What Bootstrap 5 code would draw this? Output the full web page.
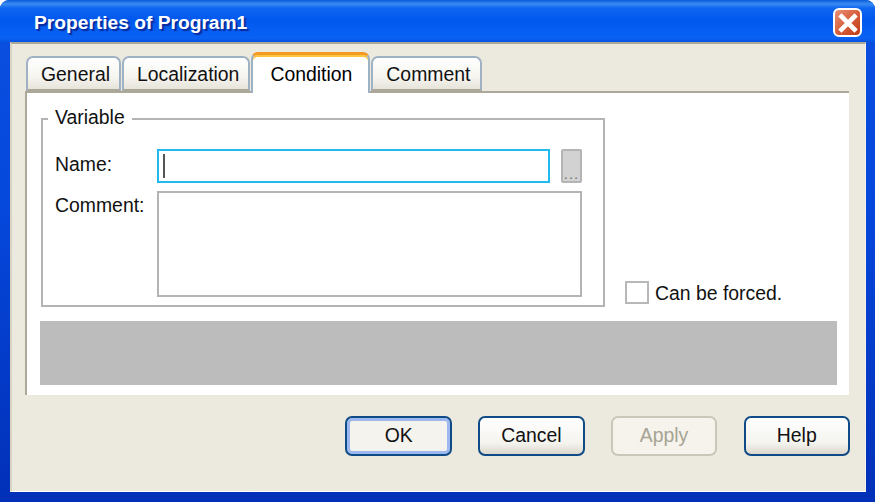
<!DOCTYPE html>
<html lang="en">
<head>
<meta charset="utf-8">
<title>Properties of Program1</title>
<link href="https://cdn.jsdelivr.net/npm/bootstrap@5.3.0/dist/css/bootstrap.min.css" rel="stylesheet">
<style>
html,body{margin:0;background:#fff;height:100%;overflow:hidden}
body{font-family:"Liberation Sans",Arial,sans-serif;font-size:19.4px;color:#111}
.xpwin{width:875px;height:502px;border-radius:9px 9px 0 0;overflow:hidden;background:linear-gradient(180deg,#0a50e0 0%,#0548dc 40%,#0230b8 100%);padding:0 9px 9px 10px}
.xpbar{height:42px;margin:0 -9px 0 -10px;padding:3px 13px 0 34px;background:linear-gradient(180deg,#0a5ad8 0,#3a8cf4 4px,#0f66f0 8px,#0058ee 20px,#0a62f4 38px,#0454e0 42px)}
.xptitle{font-weight:700;font-size:19.2px;color:#fff;text-shadow:2px 2px 1px #0a2a9a;line-height:1}
.xpclose{width:29px;height:29px;padding:0;border:2px solid #fff;border-radius:6px;background:linear-gradient(135deg,#e89078 0%,#d8603c 50%,#bf3a14 100%)}
.xpclient{height:450px;background:#ece9de;border-top:2px solid #aca899;border-left:2px solid #d8d4c4;border-bottom:1px solid #fff;border-right:1px solid #f4f2ea;padding:8px 16px 0 13px}
.xptabs{border-bottom:0;height:39px;align-items:flex-end;gap:1px;padding-left:1px;margin:0;flex-wrap:nowrap}
.xptabs .nav-link{margin:0;height:35px;padding:0 9px 0 13px;border:2px solid #9fb2c4;border-bottom:2px solid #aca899;border-radius:7px 7px 0 0;background:linear-gradient(180deg,#fff 0,#f6f5f0 60%,#e6e4da 100%);color:#111;font-size:19.4px;line-height:33px}
.xptabs .xpc{padding:0 10px 0 13px}
.xptabs .nav-link.active{height:41px;margin-bottom:-2px;position:relative;z-index:1;padding:0 16px 0 17px;background:#fff;border:0;border-top:3px solid #f49a24;box-shadow:inset 0 2px 0 #fcc63c;border-left:2px solid #9fb2c4;border-right:2px solid #9fb2c4;line-height:38px}
.xppanel{height:304px;background:#fff;border-top:2px solid #aca899;border-left:2px solid #aca899;padding:15px 12px 0 14px}
.xpgroup{width:564px;height:199px;margin:0;padding:0 0 0 12px;border:2px solid #b4b4b4}
.xpgroup legend{float:none;width:auto;margin:0 0 0 -7px;padding:0 7px;font-size:19.4px;line-height:19px;height:21px;color:#111}
.xpfirst{margin-top:20px}
.xplabel{width:102px;font-size:19.4px;line-height:22px;flex:none}
.xpname{padding-bottom:5px}
.xpcomm{padding-top:3px}
.xpinput.form-control{width:393px;height:34px;flex:none;border:2px solid #22b8f0;border-radius:0;box-shadow:none;padding:0 2px}
.xpcaret{width:2px;height:24px;background:#555;margin:3px 0 0 2px}
.xpdots{width:21px;height:34px;margin-left:11px;padding:0;border:2px solid #b4b4b4;border-radius:2px;background:#d2d2d2;color:#777;font-size:15px;line-height:1;display:flex;justify-content:center;align-items:flex-end;letter-spacing:1px}
.xparea.form-control{width:425px;height:106px;flex:none;border:2px solid #b4b4b4;border-radius:0;box-shadow:none;resize:none;min-height:0}
.xpcheckline{margin-left:20px;padding-bottom:3px;line-height:22px}
.xpcheck{width:24px;height:23px;border:2px solid #b8b8b8;background:#fff;margin-right:6px;flex:none}
.xpgrey{height:64px;margin:14px 0 0 -1px;width:797px;background:#bcbcbc}
.xpfoot{padding:21px 0 0 0;gap:26.2px;width:825px}
.xpbtn.btn{width:106.5px;height:40px;padding:0;font-size:19.4px;color:#111;border:2px solid #0f4b86;border-radius:7px;background:linear-gradient(180deg,#fff 0,#f4f3ee 70%,#dcd8cc 100%)}
.xpbtn.xpdefault{box-shadow:inset 0 0 0 3px #9db8f0;background:#f4f3ee}
.xpbtn.btn:disabled{opacity:1;color:#a6a494;border-color:#c9c7ba;background:#f5f3ec}
</style>
</head>
<body>
<div class="xpwin">
  <div class="xpbar d-flex align-items-center justify-content-between">
    <span class="xptitle">Properties of Program1</span>
    <button class="xpclose d-flex align-items-center justify-content-center" type="button" aria-label="Close">
      <svg width="20" height="20" viewBox="0 0 20 20"><path d="M3.5 3.5 16.5 16.5M16.5 3.5 3.5 16.5" stroke="#fff" stroke-width="4.6" stroke-linecap="square" fill="none"/></svg>
    </button>
  </div>
  <div class="xpclient">
    <ul class="nav nav-tabs xptabs">
      <li class="nav-item"><a class="nav-link" href="#">General</a></li>
      <li class="nav-item"><a class="nav-link" href="#">Localization</a></li>
      <li class="nav-item"><a class="nav-link active" href="#">Condition</a></li>
      <li class="nav-item"><a class="nav-link xpc" href="#">Comment</a></li>
    </ul>
    <div class="xppanel">
      <div class="d-flex">
        <fieldset class="xpgroup">
          <legend>Variable</legend>
          <div class="d-flex align-items-center xpfirst">
            <span class="xplabel xpname">Name:</span>
            <div class="form-control xpinput"><div class="xpcaret"></div></div>
            <button class="xpdots" type="button" disabled>...</button>
          </div>
          <div class="d-flex mt-2">
            <span class="xplabel xpcomm">Comment:</span>
            <textarea class="form-control xparea" aria-label="Comment"></textarea>
          </div>
        </fieldset>
        <div class="xpcheckline d-flex align-items-end">
          <span class="xpcheck"></span><span>Can be forced.</span>
        </div>
      </div>
      <div class="xpgrey"></div>
    </div>
    <div class="xpfoot d-flex justify-content-end">
      <button class="btn xpbtn xpdefault" type="button">OK</button>
      <button class="btn xpbtn" type="button">Cancel</button>
      <button class="btn xpbtn" type="button" disabled>Apply</button>
      <button class="btn xpbtn" type="button">Help</button>
    </div>
  </div>
</div>
</body>
</html>
